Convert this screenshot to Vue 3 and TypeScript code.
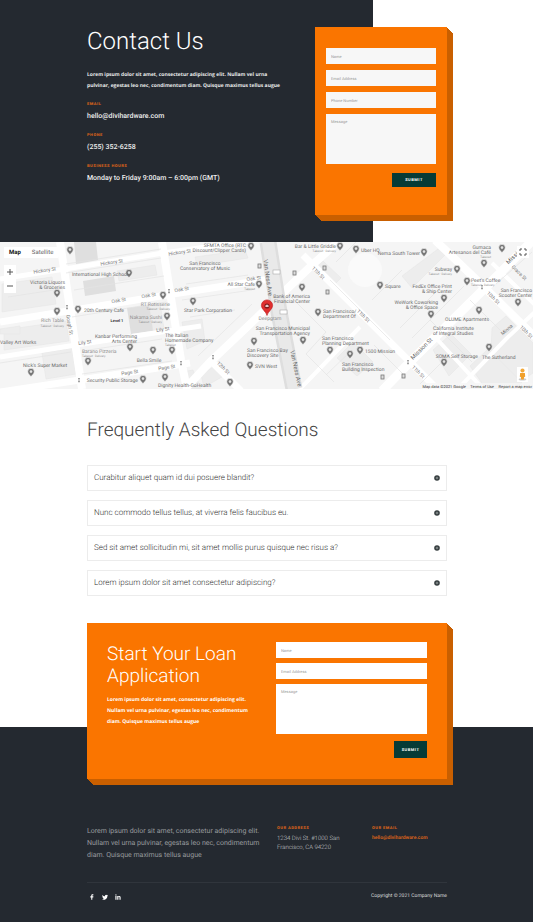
<script setup lang="ts">
import { ref } from 'vue'

interface Label {
  x: number
  y: number
  text: string
  anchor?: 'start' | 'middle' | 'end'
  tone?: 'soft' | 'minor' | 'strong'
}
interface Street {
  x: number
  y: number
  angle: number
  text: string
}

const contacts = [
  { term: 'Email', value: 'hello@divihardware.com' },
  { term: 'Phone', value: '(255) 352-6258' },
  { term: 'Business Hours', value: 'Monday to Friday 9:00am – 6:00pm (GMT)' },
]

const questions = [
  'Curabitur aliquet quam id dui posuere blandit?',
  'Nunc commodo tellus tellus, at viverra felis faucibus eu.',
  'Sed sit amet sollicitudin mi, sit amet mollis purus quisque nec risus a?',
  'Lorem ipsum dolor sit amet consectetur adipiscing?',
]
const openQuestion = ref<number | null>(null)

const mapType = ref<'map' | 'satellite'>('map')

const landmarks = [
  'M74 242h22l2 18-22 4z', 'M83 281l31-5 2 15-31 5z', 'M127 308l22-3 4 26-22 3z',
]

const blocks = [
  'M117 271l38-6 2 10-38 6z', 'M149 305l11-2 4 26-11 2z', 'M2 284l50-7 4 27-54 8z',
  'M4 330l62-9 3 20-65 9z', 'M42 353l30-5 4 26-30 5z', 'M182 322l20-3 3 22-18 8z',
  'M195 257l50-7 3 8-51 8z', 'M213 367l9 10-18 10-3-12z', 'M402 276l40-30 6 6-36 36z',
  'M433 350l18-16 20 20-22 22z', 'M492 328l14-12 27 27v30l-12 8-30-30z',
  'M470 366l18-17 34 34-8 6h-28z', 'M181 372l12-2 8 19h-16z', 'M314 268l9-7 18 17-8 8z',
  'M337 358l16-16 20 20-16 14z', 'M0 334l0-5 20-3v8z',
]

const pins: [number, number][] = [
  [70, 250], [129, 273], [57, 293], [57, 311], [78, 309], [163, 295], [167, 316],
  [130, 347], [153, 350], [172, 350], [88, 361], [31, 372], [143, 379], [165, 377],
  [251, 246], [340, 246], [356, 249], [259, 284], [302, 287], [193, 301], [318, 312],
  [303, 340], [254, 341], [330, 350], [350, 354], [360, 350], [250, 365], [230, 382],
  [424, 252], [502, 248], [484, 263], [457, 269], [467, 281], [380, 285], [444, 298],
  [431, 314], [479, 310], [518, 302], [489, 347], [444, 362],
]

const transit: [number, number][] = [
  [259, 266], [294, 273], [324, 268], [327, 292], [382, 377], [403, 376],
]

const labels: Label[] = [
  { x: 72, y: 276, text: 'International High School' },
  { x: 65, y: 284, text: 'Victoria Liquors', anchor: 'end' },
  { x: 65, y: 289, text: '& Groceries', anchor: 'end' },
  { x: 64, y: 322, text: 'Rich Table', anchor: 'end', tone: 'soft' },
  { x: 64, y: 327, text: 'Takeout · Delivery', anchor: 'end', tone: 'minor' },
  { x: 84, y: 312, text: '20th Century Cafe' },
  { x: 117, y: 322, text: 'Level 1', anchor: 'middle', tone: 'strong' },
  { x: 170, y: 306, text: 'RT Rotisserie', anchor: 'end', tone: 'soft' },
  { x: 170, y: 310, text: 'Takeout · Delivery', anchor: 'end', tone: 'minor' },
  { x: 162, y: 319, text: 'Nakama Sushi', anchor: 'end', tone: 'soft' },
  { x: 162, y: 323, text: 'Takeout · Delivery', anchor: 'end', tone: 'minor' },
  { x: 0, y: 344, text: 'Valley Art Works' },
  { x: 137, y: 338, text: 'Kanbar Performing', anchor: 'end' },
  { x: 137, y: 343, text: 'Arts Center', anchor: 'end' },
  { x: 165, y: 337, text: 'The Italian' },
  { x: 165, y: 342, text: 'Homemade Company' },
  { x: 165, y: 346, text: 'Takeout', tone: 'minor' },
  { x: 82, y: 353, text: 'Barano Pizzeria', tone: 'soft' },
  { x: 82, y: 357, text: 'Takeout · Delivery', tone: 'minor' },
  { x: 149, y: 362, text: 'Bella Smile', anchor: 'middle' },
  { x: 23, y: 367, text: "Nick's Super Market" },
  { x: 138, y: 382, text: 'Security Public Storage', anchor: 'end' },
  { x: 158, y: 387, text: 'Dignity Health-GoHealth' },
  { x: 246, y: 247, text: 'SFMTA Office (RTC', anchor: 'end' },
  { x: 246, y: 252, text: 'Discount/Clipper Cards)', anchor: 'end' },
  { x: 205, y: 265, text: 'San Francisco', anchor: 'middle' },
  { x: 205, y: 270, text: 'Conservatory of Music', anchor: 'middle' },
  { x: 255, y: 286, text: 'All Star Cafe', anchor: 'end' },
  { x: 255, y: 290, text: 'Takeout', anchor: 'end', tone: 'minor' },
  { x: 208, y: 312, text: 'Star Park Corporation', anchor: 'middle' },
  { x: 310, y: 298, text: 'Bank of America', anchor: 'end' },
  { x: 310, y: 303, text: 'Financial Center', anchor: 'end' },
  { x: 270, y: 320, text: 'Deepgram', anchor: 'middle', tone: 'soft' },
  { x: 310, y: 330, text: 'San Francisco Municipal', anchor: 'end' },
  { x: 310, y: 335, text: 'Transportation Agency', anchor: 'end' },
  { x: 247, y: 352, text: 'San Francisco Bay' },
  { x: 247, y: 357, text: 'Discovery Site' },
  { x: 255, y: 368, text: 'SVN West' },
  { x: 336, y: 248, text: 'Bar & Little Griddle', anchor: 'end' },
  { x: 336, y: 252, text: 'Takeout · Delivery', anchor: 'end', tone: 'minor' },
  { x: 323, y: 313, text: 'San Francisco/' },
  { x: 323, y: 318, text: 'Department Of' },
  { x: 322, y: 340, text: 'San Francisco' },
  { x: 322, y: 345, text: 'Planning Department' },
  { x: 342, y: 366, text: 'San Francisco' },
  { x: 342, y: 371, text: 'Building Inspection' },
  { x: 365, y: 353, text: '1500 Mission' },
  { x: 361, y: 252, text: 'Uber HQ' },
  { x: 420, y: 255, text: 'Nema South Tower', anchor: 'end' },
  { x: 385, y: 288, text: 'Square' },
  { x: 491, y: 249, text: 'Gumaca', anchor: 'end' },
  { x: 491, y: 254, text: 'Artesanos del Café', anchor: 'end' },
  { x: 491, y: 258, text: 'Takeout', anchor: 'end', tone: 'minor' },
  { x: 452, y: 271, text: 'Subway', anchor: 'end' },
  { x: 452, y: 275, text: 'Takeout · Delivery', anchor: 'end', tone: 'minor' },
  { x: 471, y: 282, text: "Peet's Coffee" },
  { x: 471, y: 286, text: 'Takeout · Delivery', tone: 'minor' },
  { x: 452, y: 288, text: 'FedEx Office Print', anchor: 'end' },
  { x: 452, y: 293, text: '& Ship Center', anchor: 'end' },
  { x: 438, y: 304, text: 'WeWork Coworking', anchor: 'end' },
  { x: 438, y: 309, text: '& Office Space', anchor: 'end' },
  { x: 467, y: 321, text: 'OLUME Apartments', anchor: 'middle' },
  { x: 433, y: 330, text: 'California Institute' },
  { x: 433, y: 335, text: 'of Integral Studies' },
  { x: 532, y: 292, text: 'San Francisco', anchor: 'end' },
  { x: 532, y: 297, text: 'Scooter Center', anchor: 'end' },
  { x: 478, y: 358, text: 'SOMA Self Storage', anchor: 'end' },
  { x: 482, y: 359, text: 'The Sutherland' },
]

const streets: Street[] = [
  { x: 45, y: 272, angle: -9, text: 'Hickory St' },
  { x: 112, y: 264, angle: -9, text: 'Hickory St' },
  { x: 180, y: 254, angle: -9, text: 'Hickory St' },
  { x: 119, y: 302, angle: -9, text: 'Oak St' },
  { x: 149, y: 297, angle: -9, text: 'Oak St' },
  { x: 182, y: 291, angle: -9, text: 'Oak St' },
  { x: 254, y: 280, angle: -7, text: 'Oak St' },
  { x: 68, y: 325, angle: 80, text: 'Gough St' },
  { x: 85, y: 344, angle: -8, text: 'Lily St' },
  { x: 163, y: 331, angle: -8, text: 'Lily St' },
  { x: 130, y: 374, angle: -8, text: 'Page St' },
  { x: 167, y: 369, angle: -8, text: 'Page St' },
  { x: 222, y: 369, angle: 45, text: '12th St' },
  { x: 317, y: 274, angle: 45, text: '11th St' },
  { x: 362, y: 317, angle: 45, text: '11th St' },
  { x: 417, y: 373, angle: 45, text: '11th St' },
  { x: 492, y: 299, angle: 45, text: '10th St' },
  { x: 525, y: 333, angle: 45, text: '10th St' },
  { x: 518, y: 274, angle: 45, text: 'Grace St' },
  { x: 508, y: 331, angle: -42, text: 'Minna' },
]
</script>

<template>
  <main class="page">
    <section class="hero">
      <div class="hero-copy">
        <h1>Contact Us</h1>
        <p class="copy">
          Lorem ipsum dolor sit amet, consectetur adipiscing elit. Nullam vel urna pulvinar, egestas
          leo nec, condimentum diam. Quisque maximus tellus augue
        </p>
        <dl>
          <div v-for="c in contacts" :key="c.term" class="contact">
            <dt class="eyebrow">{{ c.term }}</dt>
            <dd>{{ c.value }}</dd>
          </div>
        </dl>
      </div>
      <form class="slab contact-form" @submit.prevent>
        <input type="text" placeholder="Name" aria-label="Name" />
        <input type="email" placeholder="Email Address" aria-label="Email Address" />
        <input type="tel" placeholder="Phone Number" aria-label="Phone Number" />
        <textarea placeholder="Message" aria-label="Message"></textarea>
        <button type="submit" class="submit">Submit</button>
      </form>
    </section>

    <section class="map" aria-label="Map">
      <svg class="map-canvas" viewBox="0 242 533 147" preserveAspectRatio="xMidYMid slice">
        <defs>
          <g id="pin">
            <path d="M0 5.2C-.6 3.2-3.3 2.2-3.3-.4a3.3 3.3 0 0 1 6.6 0C3.3 2.2.6 3.2 0 5.2z" fill="#777" stroke="#fff" stroke-width=".6" />
            <circle r="1.3" cy="-.4" fill="#e4e4e4" />
          </g>
        </defs>
        <rect y="242" width="533" height="147" fill="#f5f5f5" />
        <path v-for="b in blocks" :key="b" :d="b" fill="#ededed" stroke="#e4e4e4" stroke-width=".5" />
        <path v-for="b in landmarks" :key="b" :d="b" fill="#dfdfdf" />
        <circle cx="365" cy="270" r="17" fill="#fafafa" />

        <g fill="none" stroke="#fff">
          <path stroke-width="8" d="M60 242l22 147M162 242l19 118 6 29" />
          <path stroke-width="5" d="M0 279l65-10 98-16 100-14M0 357l76-12 105-16 20-3" />
          <path stroke-width="7" d="M0 322l68-11 105-17 97-15M0 392l80-12 110-17" />
          <path stroke-width="8" d="M185 389l25-27 56-53 44-42 30-27" />
          <path stroke-width="7" d="M211 361l30 30M303 255l107 107 29 29" />
          <path stroke-width="9" d="M382 391l28-29 75-74 50-50" />
          <path stroke-width="8" d="M435 240l50 48 50 49" />
          <path stroke-width="4" d="M456 391l50-52 30-28M492 263l43 42M300 389l60-62M435 337l50 54" />
        </g>
        <g fill="none" stroke="#e4e4e4" stroke-width=".7">
          <path d="M66 273l95-15M74 290l90-14M66 264l95-15M72 317l94-15M8 297l46-7M0 363l71-11M82 351l80-12M82 374l90-13M182 300l70-10M186 284l62-9M190 317l45-7M198 356l54-52M290 296l36 36-20 22M330 280l60 60M372 300l30-30M400 328l40-40M412 338l52-52M430 320l42 42M374 345l32 32M336 262l20-20M470 300l34 34M420 384l30-30M496 284l36-32M326 375l26-25M306 354l28 28" />
        </g>
        <path d="M268 242l11 70 15 77" fill="none" stroke="#dedede" stroke-width="17" />
        <path d="M268 242l11 70 15 77" fill="none" stroke="#e9e9e9" stroke-width="12" />

        <g class="street">
          <text v-for="(s, i) in streets" :key="i" :transform="`translate(${s.x} ${s.y}) rotate(${s.angle})`">{{ s.text }}</text>
          <g class="avenue">
            <text transform="translate(266 278) rotate(82)">Van Ness Ave</text>
            <text transform="translate(294 369) rotate(78)">Van Ness Ave</text>
            <text transform="translate(423 350) rotate(-45)">Mission St</text>
            <text transform="translate(516 257) rotate(-45)">Mission</text>
          </g>
        </g>

        <g fill="#fff" stroke="#aaa" stroke-width=".6">
          <rect x="273" y="270" width="7" height="4" />
          <rect x="280" y="310" width="7" height="4" />
        </g>
        <rect v-for="[x, y] in transit" :key="`${x}-${y}`" :x="x - 1" :y="y - 2" width="3" height="4" fill="#ddd" stroke="#777" stroke-width=".8" />
        <g fill="none" stroke="#8a8a8a" stroke-width="1.6" stroke-dasharray="1.6 .8">
          <path d="M67 305v5M79 378v5M169 289v5M181 361v5M213 355v5M408 360v5M482 285v5" />
        </g>

        <use v-for="[x, y] in pins" :key="`${x}-${y}`" href="#pin" :x="x" :y="y" />
        <g class="place">
          <text
            v-for="(l, i) in labels"
            :key="i"
            :x="l.x"
            :y="l.y"
            :text-anchor="l.anchor ?? 'start'"
            :class="l.tone"
          >{{ l.text }}</text>
        </g>

        <path d="M267 315.500c-.8-4-5.600-6-5.600-10a5.600 5.600 0 0 1 11.200 0c0 4-4.800 6-5.600 10z" fill="#e02f2f" stroke="#b81818" stroke-width=".6" />
        <circle cx="267" cy="306" r="2.600" fill="#7d1a1a" />
        <path d="M265.400 307v-1.600l1.600-1 1.600 1v1.600z" fill="#e8c9c9" />

        <g class="legal">
          <rect x="421" y="383" width="112" height="6" fill="#f5f5f5" opacity=".75" />
          <text x="466" y="388">Map data ©2021 Google</text>
          <text x="494" y="388">Terms of Use</text>
          <text x="532" y="388">Report a map error</text>
        </g>
      </svg>

      <div class="map-types">
        <button type="button" :class="{ active: mapType === 'map' }" @click="mapType = 'map'">Map</button>
        <button type="button" :class="{ active: mapType === 'satellite' }" @click="mapType = 'satellite'">Satellite</button>
      </div>
      <div class="map-zoom">
        <button type="button" aria-label="Zoom in">
          <svg viewBox="0 0 8 8"><path d="M4 1v6M1 4h6" /></svg>
        </button>
        <button type="button" aria-label="Zoom out">
          <svg viewBox="0 0 8 8"><path d="M1 4h6" /></svg>
        </button>
      </div>
      <button type="button" class="map-full" aria-label="Full screen">
        <svg viewBox="0 0 8 8"><path d="M1 3V1h2M5 1h2v2M7 5v2H5M3 7H1V5" /></svg>
      </button>
      <button type="button" class="map-person" aria-label="Street view">
        <svg viewBox="0 0 8 12">
          <ellipse cx="4" cy="10.500" rx="3.500" ry="1" fill="#ccc" />
          <circle cx="4" cy="2.300" r="1.900" fill="#f2a93b" />
          <path d="M1.800 4.500h4.400l.3 3.500-1 .2-.3 2.500H2.800L2.500 8.200l-1-.2z" fill="#f0a02c" />
        </svg>
      </button>
    </section>

    <section class="faq">
      <h2>Frequently Asked Questions</h2>
      <ul>
        <li v-for="(q, i) in questions" :key="q">
          <button type="button" :aria-expanded="openQuestion === i" @click="openQuestion = openQuestion === i ? null : i">
            <span>{{ q }}</span>
            <svg viewBox="0 0 6 6"><circle cx="3" cy="3" r="2.800" fill="#343c3e" /><path d="M3 1.700v2.600M1.700 3h2.600" stroke="#aab0b0" stroke-width=".7" /></svg>
          </button>
        </li>
      </ul>
    </section>

    <section class="loan">
      <div class="slab loan-card">
        <div class="loan-copy">
          <h2>Start Your Loan Application</h2>
          <p class="copy">
            Lorem ipsum dolor sit amet, consectetur adipiscing elit. Nullam vel urna pulvinar, egestas
            leo nec, condimentum diam. Quisque maximus tellus augue
          </p>
        </div>
        <form class="loan-form" @submit.prevent>
          <input type="text" placeholder="Name" aria-label="Name" />
          <input type="email" placeholder="Email Address" aria-label="Email Address" />
          <textarea placeholder="Message" aria-label="Message"></textarea>
          <button type="submit" class="submit">Submit</button>
        </form>
      </div>
    </section>

    <footer class="footer">
      <div class="footer-top">
        <p class="about">
          Lorem ipsum dolor sit amet, consectetur adipiscing elit. Nullam vel urna pulvinar, egestas
          leo nec, condimentum diam. Quisque maximus tellus augue
        </p>
        <div>
          <h3 class="eyebrow">Our Address</h3>
          <address>1234 Divi St. #1000 San Francisco, CA 94220</address>
        </div>
        <div>
          <h3 class="eyebrow">Our Email</h3>
          <a class="mail" href="mailto:hello@divihardware.com">hello@divihardware.com</a>
        </div>
      </div>
      <div class="footer-bottom">
        <nav class="social" aria-label="Social">
          <a href="#facebook" aria-label="Facebook">
            <svg viewBox="0 0 16 16"><path d="M6 15V9H3.500V6H6V4.200C6 1.900 7.300.8 9.500.8c1 0 2 .1 2.300.2v2.600h-1.600C9 3.600 8.800 4.200 8.800 5v1h2.900l-.4 3H8.800v6z" /></svg>
          </a>
          <a href="#twitter" aria-label="Twitter">
            <svg viewBox="0 0 16 16"><path d="M16 3.500c-.6.300-1.200.4-1.900.5.700-.4 1.200-1 1.400-1.800-.6.400-1.300.6-2.100.8A3.300 3.300 0 0 0 7.800 6C5.100 5.900 2.700 4.600 1.100 2.600c-.8 1.400-.4 3.300 1 4.300-.5 0-1-.2-1.500-.4 0 1.600 1.100 2.900 2.600 3.200-.5.100-1 .2-1.500.1.400 1.300 1.600 2.200 3.100 2.300A6.600 6.600 0 0 1 0 13.400 9.300 9.300 0 0 0 14.400 5.100c.6-.4 1.200-1 1.600-1.600z" /></svg>
          </a>
          <a href="#linkedin" aria-label="LinkedIn">
            <svg viewBox="0 0 16 16"><path d="M1 5.500h3V15H1zM2.500.8a1.700 1.700 0 1 1 0 3.400 1.700 1.700 0 0 1 0-3.400zM6 5.500h2.900v1.300c.5-.9 1.500-1.500 2.800-1.500C14.500 5.300 15 7.200 15 9.600V15h-3v-4.800c0-1.200 0-2.400-1.500-2.400S9 9 9 10.200V15H6z" /></svg>
          </a>
        </nav>
        <p>Copyright © 2021 Company Name</p>
      </div>
    </footer>
  </main>
</template>

<style>
body {
  margin: 0;
  background: #fff;
}
</style>

<style scoped>
.page {
  --ink: #242930;
  --orange: #fa7500;
  --side: #c95f00;
  --rust: #d3601b;
  --green: #063b36;
  font-family: Roboto, sans-serif;
  text-rendering: geometricPrecision;
  color: #444;
}
.page * {
  box-sizing: border-box;
}
h1, h2, h3, p, dl, dd, ul {
  margin: 0;
  padding: 0;
}
button, input, textarea {
  font-family: inherit;
  text-rendering: inherit;
  border: 0;
  border-radius: 0;
  margin: 0;
  padding: 0;
  background: none;
}
svg {
  display: block;
}
h1, h2 {
  font-weight: 300;
}
.copy {
  font: 700 5px/11px "Open Sans", sans-serif;
}
.eyebrow {
  font-size: 4px;
  line-height: 6px;
  font-weight: 900;
  letter-spacing: 0.5px;
  text-transform: uppercase;
  color: var(--rust);
}

.slab {
  background: var(--orange);
  box-shadow: 1px 1px var(--side), 2px 2px var(--side), 3px 3px var(--side),
    4px 4px var(--side), 5px 5px var(--side), 6px 6px var(--side);
}
.slab input,
.slab textarea {
  display: block;
  width: 100%;
  padding: 0 5px;
  background: #fff;
  font: 400 4px/6px Roboto, sans-serif;
  color: #444;
}
.slab input {
  height: 16px;
}
.slab textarea {
  height: 50px;
  padding-top: 5px;
  resize: none;
}
.slab ::placeholder {
  color: #999;
  opacity: 1;
}
.submit {
  align-self: flex-end;
  background: var(--green);
  color: #fff;
  font-size: 4px;
  line-height: 6px;
  font-weight: 700;
  letter-spacing: 0.5px;
  text-transform: uppercase;
}

.hero {
  display: grid;
  grid-template-columns: 1fr 132px;
  gap: 27px;
  align-items: start;
  padding: 27px 86px 27px 87px;
  background: linear-gradient(90deg, var(--ink) 70%, #fff 70%);
}
.hero-copy {
  color: #fff;
}
h1 {
  font-size: 24px;
  line-height: 29px;
}
.hero .copy {
  margin-top: 14px;
  color: #e8e9ea;
}
dl {
  display: grid;
  gap: 11px;
  margin-top: 9px;
}
.contact {
  display: grid;
  gap: 5px;
}
dd {
  font-size: 7px;
  line-height: 9px;
  font-weight: 500;
  color: #eee;
}
.contact-form {
  display: flex;
  flex-direction: column;
  gap: 6px;
  padding: 21px 11px 28px;
}
.contact-form input,
.contact-form textarea {
  background: #f7f7f7;
}
.contact-form .submit {
  width: 44px;
  height: 14px;
  margin-top: 3px;
}

.map {
  position: relative;
  height: 147px;
  overflow: hidden;
}
.map-canvas {
  width: 100%;
  height: 100%;
}
.place text {
  font-size: 5px;
  fill: #6c6c6c;
}
.place .soft {
  fill: #8d8d8d;
}
.place .minor {
  font-size: 3px;
  fill: #8d8d8d;
}
.place .strong {
  font-size: 4px;
  font-weight: 700;
  fill: #333;
}
.street text {
  font-size: 5px;
  text-anchor: middle;
  fill: #777;
}
.street .avenue text {
  font-size: 6px;
  fill: #666;
}
.legal text {
  font-size: 4px;
  text-anchor: end;
  fill: #333;
}
.map-types {
  position: absolute;
  top: 5px;
  left: 4px;
  display: flex;
  background: #fff;
}
.map-types button {
  height: 11px;
  padding: 0 5px;
  font-size: 6px;
  line-height: 11px;
  color: #666;
}
.map-types button + button {
  padding-left: 6px;
}
.map-types .active {
  font-weight: 700;
  color: #111;
}
.map-zoom {
  position: absolute;
  top: 23px;
  left: 4px;
  display: grid;
  background: #fff;
}
.map-zoom button {
  width: 12px;
  height: 14px;
  padding: 2px;
}
.map-zoom svg,
.map-full svg {
  width: 8px;
  height: 8px;
  fill: none;
  stroke: #555;
}
.map-full {
  position: absolute;
  top: 4px;
  right: 4px;
  padding: 2px;
  background: #fff;
}
.map-person {
  position: absolute;
  right: 5px;
  bottom: 7px;
  padding: 1px;
  background: #fff;
}
.map-person svg {
  width: 9px;
  height: 13px;
}

.faq {
  padding: 29px 86px 27px 87px;
}
.faq h2 {
  font-size: 19px;
  line-height: 24px;
}
.faq ul {
  display: grid;
  gap: 9px;
  margin-top: 23px;
  list-style: none;
}
.faq button {
  display: flex;
  align-items: center;
  justify-content: space-between;
  width: 100%;
  height: 26px;
  padding: 0 6px;
  border: 1px solid #ececec;
  font-size: 8px;
  line-height: 12px;
  font-weight: 300;
  color: #333;
  text-align: left;
}
.faq button svg {
  width: 6px;
  height: 6px;
}

.loan {
  padding: 0 86px 46px 87px;
  background: linear-gradient(#fff 104px, var(--ink) 104px);
}
.loan-card {
  display: grid;
  grid-template-columns: 149fr 151fr;
  gap: 20px;
  padding: 19px 20px 21px;
}
.loan-copy {
  padding-top: 1px;
  color: #fff;
}
.loan-copy h2 {
  font-size: 19px;
  line-height: 22px;
}
.loan-copy .copy {
  margin-top: 8px;
}
.loan-form {
  display: flex;
  flex-direction: column;
  gap: 5px;
}
.loan-form .submit {
  width: 33px;
  height: 17px;
  margin-top: 2px;
}

.footer {
  padding: 0 86px 21px 87px;
  background: var(--ink);
}
.footer-top {
  display: grid;
  grid-template-columns: 174fr 79fr 75fr;
  gap: 16px;
  padding-bottom: 21px;
  border-bottom: 1px solid #30353c;
}
.about {
  font-size: 7px;
  line-height: 12px;
  color: #989b9e;
}
address {
  margin-top: 3px;
  padding-right: 4px;
  font-size: 6px;
  line-height: 9px;
  font-style: normal;
  font-weight: 300;
  color: #d0d2d4;
}
.mail {
  display: block;
  margin-top: 3px;
  font-size: 5px;
  line-height: 8px;
  font-weight: 700;
  color: var(--rust);
  text-decoration: none;
}
.footer-bottom {
  display: flex;
  justify-content: space-between;
  padding-top: 8px;
}
.footer-bottom p {
  font-size: 5px;
  line-height: 10px;
  color: #ddd;
}
.social {
  display: flex;
  gap: 7px;
  padding: 3px 0 0 2px;
}
.social svg {
  width: 6px;
  height: 6px;
  fill: #fff;
}
</style>
